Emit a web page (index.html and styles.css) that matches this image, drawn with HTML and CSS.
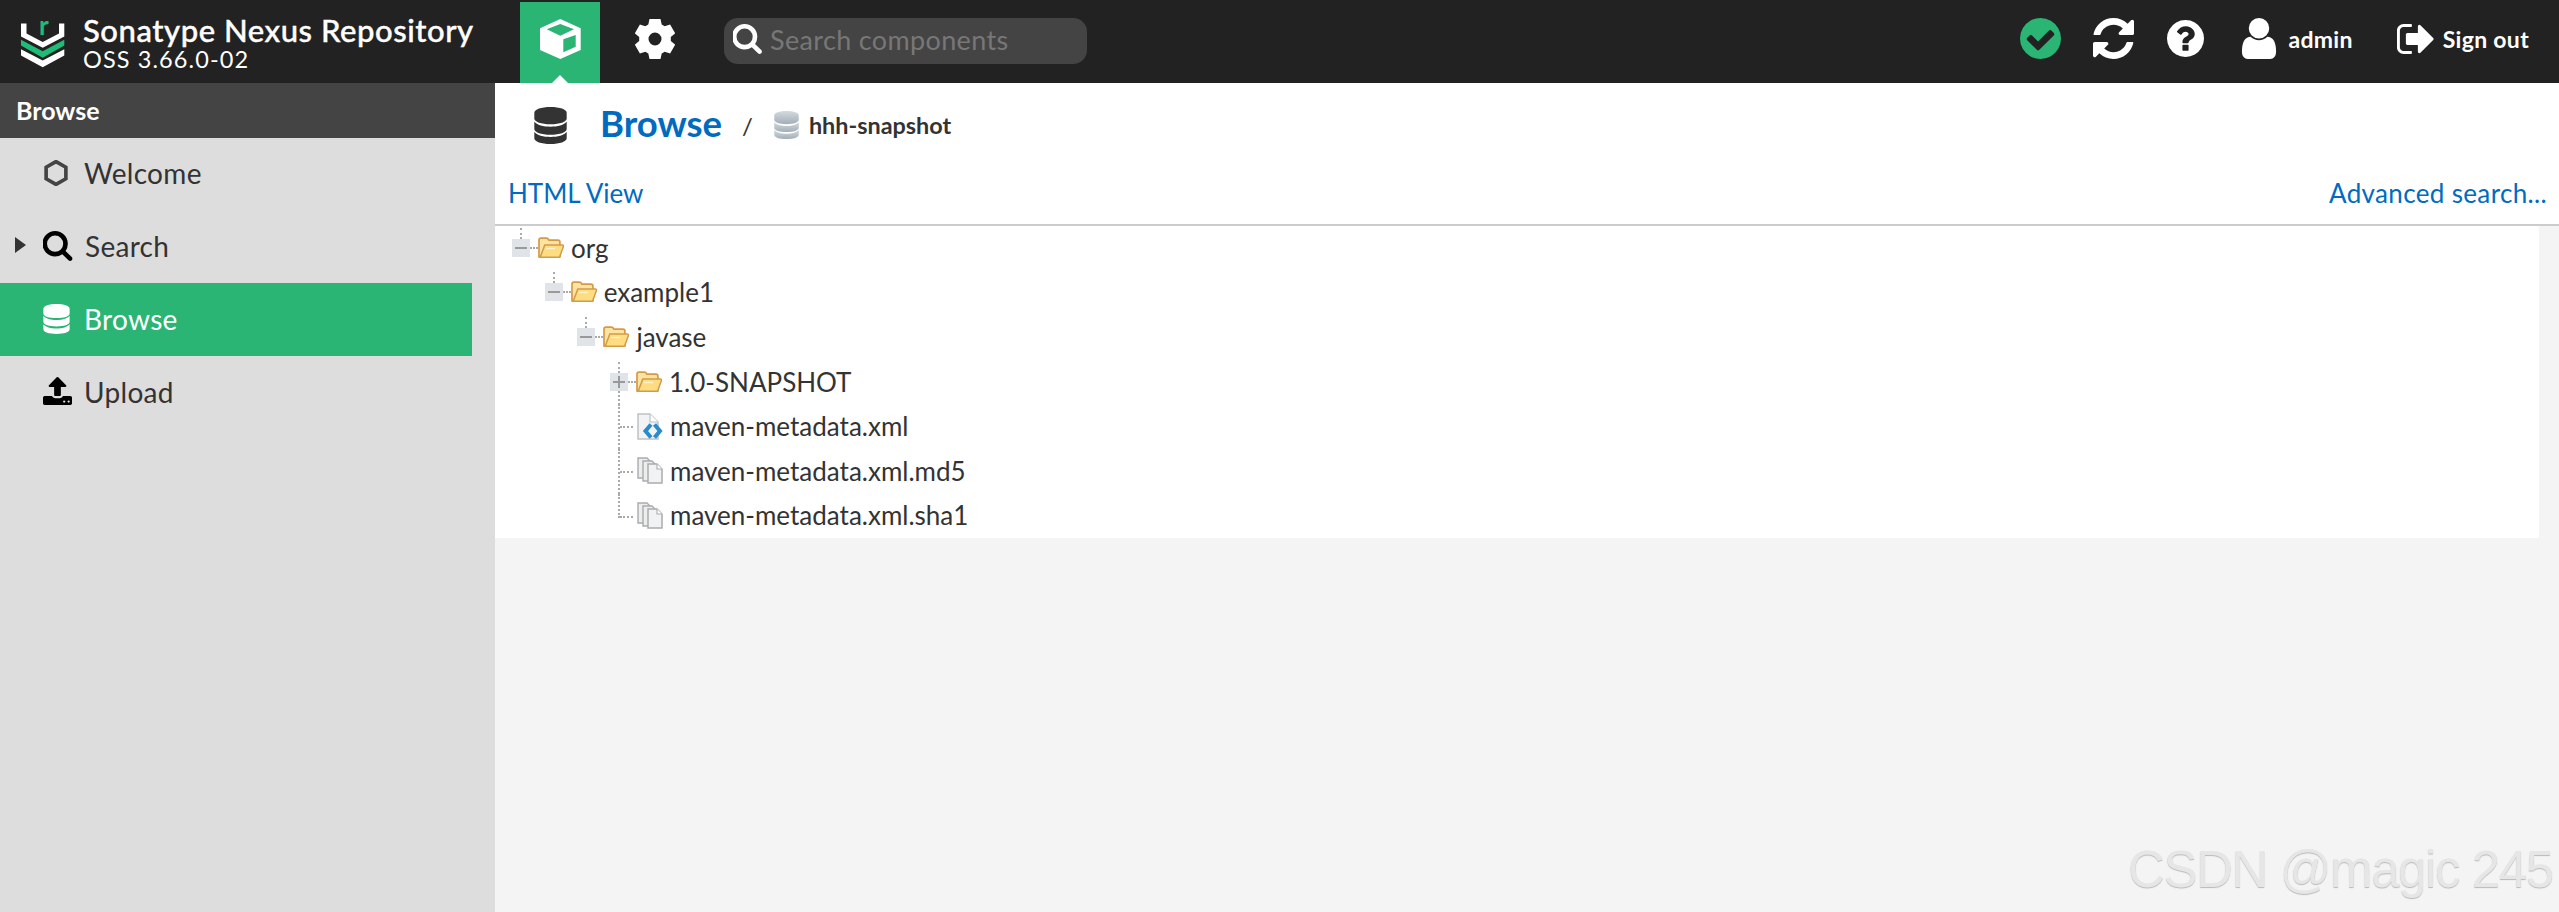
FILE: index.html
```html
<!DOCTYPE html>
<html lang="en">
<head>
<meta charset="utf-8">
<title>Browse - Sonatype Nexus Repository</title>
<link rel="stylesheet" href="styles.css">
</head>
<body>
<svg class="defs" width="0" height="0" aria-hidden="true">
  <defs>
    <symbol id="i-db" viewBox="0 0 28 32">
      <path d="M0 5c0-3 6-5 14-5s14 2 14 5v5c0 3-6 5-14 5S0 13 0 10z"/>
      <path d="M0 12.500c2 3 8 4.500 14 4.500s12-1.500 14-4.500V19c0 3-6 5-14 5S0 22 0 19z"/>
      <path d="M0 21.500c2 3 8 4.500 14 4.500s12-1.500 14-4.500V27c0 3-6 5-14 5S0 30 0 27z"/>
    </symbol>
    <symbol id="i-search" viewBox="128 128 1600 1664"><path d="M1216 832q0-185-131.5-316.5t-316.5-131.5-316.5 131.5-131.5 316.5 131.5 316.5 316.5 131.5 316.5-131.5 131.5-316.5zm512 832q0 52-38 90t-90 38q-54 0-90-38l-343-342q-179 124-399 124-143 0-273.5-55.5t-225-150-150-225-55.5-273.5 55.5-273.5 150-225 225-150 273.5-55.5 273.5 55.5 225 150 150 225 55.5 273.5q0 220-124 399l343 343q37 37 37 90z"/></symbol>
    <symbol id="i-upload" viewBox="64 128 1664 1536"><path d="M1344 1472q0-26-19-45t-45-19-45 19-19 45 19 45 45 19 45-19 19-45zm256 0q0-26-19-45t-45-19-45 19-19 45 19 45 45 19 45-19 19-45zm128-224v320q0 40-28 68t-68 28h-1472q-40 0-68-28t-28-68v-320q0-40 28-68t68-28h427q21 56 70.5 92t110.5 36h256q61 0 110.5-36t70.5-92h427q40 0 68 28t28 68zm-325-648q-17 40-59 40h-256v448q0 26-19 45t-45 19h-256q-26 0-45-19t-19-45v-448h-256q-42 0-59-40-17-39 14-69l448-448q18-19 45-19t45 19l448 448q31 30 14 69z"/></symbol>
    <symbol id="i-folder" viewBox="0 0 26 22">
      <path d="M1 20V3.200C1 2 1.800 1.200 3 1.200h5.500c1 0 1.600.5 2 1.300l.4.7h9c1.200 0 2 .8 2 2v14.800z" fill="#fbe3a2" stroke="#d49a48" stroke-width="1.700"/>
      <path d="M6.800 8h17.600c.8 0 1.300.7 1 1.400l-3.600 10c-.2.6-.7.9-1.300.9H2.200z" fill="#fddc82" stroke="#d49a48" stroke-width="1.500"/>
      <path d="M8 11.500h9" stroke="#fff3cf" stroke-width="1.400"/>
    </symbol>
    <symbol id="i-xml" viewBox="0 0 26 27">
      <path d="M1 1h12l8 8v17H1z" fill="#f2f3f4" stroke="#bfc2c5" stroke-width="1.500"/>
      <path d="M13 1v8h8" fill="#fff" stroke="#bfc2c5" stroke-width="1.200"/>
      <path d="M14 11.500L8.500 18l5.500 6.500M17.500 11.500L23 18l-5.500 6.500" fill="none" stroke="#2a8bcb" stroke-width="4"/>
    </symbol>
    <symbol id="i-copies" viewBox="0 0 26 27">
      <path d="M1 1h9l3 3v17H1z" fill="#eceded" stroke="#a9acaf" stroke-width="1.400"/>
      <path d="M6 4h9l3 3v17H6z" fill="#eceded" stroke="#a9acaf" stroke-width="1.400"/>
      <path d="M11 7h9l5 5v14H11z" fill="#f1f2f3" stroke="#a9acaf" stroke-width="1.500"/>
      <path d="M20 7v5h5" fill="#fff" stroke="#a9acaf" stroke-width="1.100"/>
    </symbol>
    <linearGradient id="g-db" x1="0" y1="0" x2="0" y2="1">
      <stop offset="0" stop-color="#d3dae0"/>
      <stop offset="1" stop-color="#a2aeb8"/>
    </linearGradient>
  </defs>
</svg>

<header class="topbar">
  <div class="brand">
    <svg class="logo" viewBox="0 0 44 48" aria-hidden="true">
      <path class="logo-w" d="M0 4.500h5.500v10L21.700 23l16.300-8.500v-10h5.300v13L21.700 28.800 0 17.500z"/>
      <path class="logo-g" d="M0 20.800L21.700 32.200 43.300 20.800v5.700L21.700 38.800 0 26.500z"/>
      <path class="logo-w" d="M0 30.200L21.700 41.500 43.300 30.200v6.300L21.700 48.200 0 36.500z"/>
      <text class="logo-r" x="18" y="16">r</text>
    </svg>
    <div class="brand-text">
      <div class="brand-name">Sonatype Nexus Repository</div>
      <div class="brand-version">OSS 3.66.0-02</div>
    </div>
  </div>
  <a class="mode mode-active">
    <svg class="cube" viewBox="0 0 41 40" aria-hidden="true">
      <path fill-rule="evenodd" d="M20.300 0L40.700 9.300V31L20.300 40 0 31V9.300zM6.700 10.300L20.300 16.700 34 10.300 20.300 5zM23.300 20.300V33.300L35.700 27.700V16z"/>
    </svg>
  </a>
  <a class="mode">
    <svg class="gear" viewBox="0 0 40 40" aria-hidden="true">
      <path fill-rule="evenodd" d="M14.500 0h11l1.200 5.600 3 1.700 5.400-1.800 5 8.800-4.300 3.800v3.800l4.300 3.800-5 8.800-5.400-1.800-3 1.700L25.500 40h-11l-1.200-5.600-3-1.700-5.400 1.800-5-8.800 4.300-3.800v-3.800L-.1 14.300l5-8.800 5.400 1.800 3-1.700zM20 13.500a6.500 6.500 0 1 0 0 13 6.500 6.500 0 0 0 0-13z"/>
    </svg>
  </a>
  <div class="quick-search">
    <svg class="qs-icon"><use href="#i-search"/></svg>
    <span class="qs-text">Search components</span>
  </div>
  <div class="top-actions">
    <svg class="act act-ok" viewBox="128 128 1536 1536" aria-hidden="true"><path d="M1412 734q0-28-18-46l-91-90q-19-19-45-19t-45 19l-408 407-226-226q-19-19-45-19t-45 19l-91 90q-18 18-18 46 0 27 18 45l362 362q19 19 45 19 27 0 46-19l543-543q18-18 18-45zm252 162q0 209-103 385.500t-279.500 279.500-385.500 103-385.500-103-279.500-279.500-103-385.500 103-385.500 279.500-279.500 385.500-103 385.500 103 279.500 279.500 103 385.500z"/></svg>
    <svg class="act act-refresh" viewBox="128 128 1536 1536" aria-hidden="true"><path d="M1639 1056q0 5-1 7-64 268-268 434.500t-478 166.500q-146 0-282.500-55t-243.500-157l-129 129q-19 19-45 19t-45-19-19-45v-448q0-26 19-45t45-19h448q26 0 45 19t19 45-19 45l-137 137q71 66 161 102t187 36q134 0 250-65t186-179q11-17 53-117 8-23 30-23h192q13 0 22.500 9.500t9.500 22.500zm25-800v448q0 26-19 45t-45 19h-448q-26 0-45-19t-19-45 19-45l138-138q-148-137-349-137-134 0-250 65t-186 179q-11 17-53 117-8 23-30 23h-199q-13 0-22.500-9.500t-9.500-22.500v-7q65-268 270-434.500t480-166.500q146 0 284 55.500t245 156.500l130-129q19-19 45-19t45 19 19 45z"/></svg>
    <svg class="act act-help" viewBox="128 128 1536 1536" aria-hidden="true"><path d="M1024 1376v-192q0-14-9-23t-23-9h-192q-14 0-23 9t-9 23v192q0 14 9 23t23 9h192q14 0 23-9t9-23zm256-672q0-88-55.500-163t-138.500-116-170-41q-243 0-371 213-15 24 8 42l132 100q7 6 19 6 16 0 25-12 53-68 86-92 34-24 86-24 48 0 85.500 26t37.500 59q0 38-20 61t-68 45q-63 28-115.500 86.500t-52.500 125.500v36q0 14 9 23t23 9h192q14 0 23-9t9-23q0-19 21.500-49.500t54.500-49.500q32-18 49-28.500t46-35 44.500-48 28-60.500 12.500-81zm384 192q0 209-103 385.500t-279.500 279.500-385.500 103-385.500-103-279.500-279.500-103-385.500 103-385.500 279.500-279.500 385.500-103 385.500 103 279.500 279.500 103 385.500z"/></svg>
    <span class="act-label-group user-group">
      <svg class="act act-user" viewBox="256 128 1280 1536" aria-hidden="true"><path d="M1536 1399q0 109-62.500 187t-150.500 78h-854q-88 0-150.500-78t-62.500-187q0-85 8.500-160.500t31.500-152 58.500-131 94-89 134.500-34.500q131 128 313 128t313-128q76 0 134.500 34.500t94 89 58.500 131 31.500 152 8.500 160.500zm-256-887q0 159-112.500 271.500t-271.500 112.500-271.500-112.500-112.500-271.500 112.500-271.500 271.500-112.500 271.500 112.500 112.500 271.500z"/></svg>
      <span class="act-label">admin</span>
    </span>
    <span class="act-label-group">
      <svg class="act act-signout" viewBox="128 256 1504 1280" aria-hidden="true"><path d="M704 1440q0 4 1 20t.5 26.500-3 23.500-10 19.500-20.500 6.500h-320q-119 0-203.500-84.500t-84.500-203.500v-704q0-119 84.500-203.500t203.500-84.500h320q13 0 22.500 9.500t9.500 22.500q0 4 1 20t.5 26.500-3 23.500-10 19.500-20.500 6.500h-320q-66 0-113 47t-47 113v704q0 66 47 113t113 47h312l11.500 1 11.500 3 8 5.500 7 9 2 13.500zm928-544q0 26-19 45l-544 544q-19 19-45 19t-45-19-19-45v-288h-448q-26 0-45-19t-19-45v-384q0-26 19-45t45-19h448v-288q0-26 19-45t45-19 45 19l544 544q19 19 19 45z"/></svg>
      <span class="act-label">Sign out</span>
    </span>
  </div>
</header>

<div class="layout">
  <aside class="sidebar">
    <div class="side-title">Browse</div>
    <nav class="nav">
      <a class="nav-item">
        <svg class="nav-icon nav-hex" viewBox="0.5 0.5 23 25" aria-hidden="true"><path d="M12 2l9.500 5.500v11L12 24l-9.500-5.500v-11z"/></svg>
        <span>Welcome</span>
      </a>
      <a class="nav-item nav-branch">
        <span class="caret"></span>
        <svg class="nav-icon nav-search"><use href="#i-search"/></svg>
        <span>Search</span>
      </a>
      <a class="nav-item nav-active">
        <svg class="nav-icon nav-db"><use href="#i-db"/></svg>
        <span>Browse</span>
      </a>
      <a class="nav-item">
        <svg class="nav-icon nav-upload"><use href="#i-upload"/></svg>
        <span>Upload</span>
      </a>
    </nav>
  </aside>

  <main class="content">
    <div class="toolbar">
      <div class="crumbs">
        <svg class="crumb-db"><use href="#i-db"/></svg>
        <span class="crumb-title">Browse</span>
        <span class="crumb-sep">/</span>
        <svg class="crumb-repo"><use href="#i-db"/></svg>
        <span class="crumb-name">hhh-snapshot</span>
      </div>
      <div class="links">
        <a class="link">HTML View</a>
        <a class="link link-adv">Advanced search...</a>
      </div>
    </div>
    <div class="tree">
      <div class="row d0 has-toggle">
        <span class="toggle"><span class="dash"></span></span>
        <svg class="node-icon"><use href="#i-folder"/></svg>
        <span>org</span>
      </div>
      <div class="row d1 has-toggle">
        <span class="toggle"><span class="dash"></span></span>
        <svg class="node-icon"><use href="#i-folder"/></svg>
        <span>example1</span>
      </div>
      <div class="row d2 has-toggle">
        <span class="toggle"><span class="dash"></span></span>
        <svg class="node-icon"><use href="#i-folder"/></svg>
        <span>javase</span>
      </div>
      <div class="row d3 has-toggle toggle-plus">
        <span class="toggle"><span class="dash"></span></span>
        <svg class="node-icon"><use href="#i-folder"/></svg>
        <span>1.0-SNAPSHOT</span>
      </div>
      <div class="row d3 leaf">
        <svg class="node-icon"><use href="#i-xml"/></svg>
        <span>maven-metadata.xml</span>
      </div>
      <div class="row d3 leaf">
        <svg class="node-icon"><use href="#i-copies"/></svg>
        <span>maven-metadata.xml.md5</span>
      </div>
      <div class="row d3 leaf leaf-last">
        <svg class="node-icon"><use href="#i-copies"/></svg>
        <span>maven-metadata.xml.sha1</span>
      </div>
    </div>
  </main>
</div>
<div class="watermark">CSDN @magic 245</div>
</body>
</html>
```
FILE: styles.css
```css
* { box-sizing: border-box; }
html, body { height: 100%; }
body {
  margin: 0;
  font-family: "Lato", "Open Sans", sans-serif;
  color: #333;
  background: #f4f4f4;
  overflow: hidden;
  position: relative;
}
.defs { position: absolute; }
svg { display: block; flex: none; }

/* Top bar */
.topbar {
  height: 83px;
  background: #222;
  display: flex;
  align-items: flex-start;
  color: #fff;
}
.brand { width: 520px; display: flex; padding: 19px 0 0 21px; }
.logo { width: 44px; height: 48px; margin-right: 18px; overflow: visible; }
.logo-w { fill: #fff; }
.logo-g { fill: #1fbc78; }
.logo-r { fill: #1fbc78; font: 700 26px "Lato", sans-serif; }
.brand-text { margin-top: -5px; }
.brand-name { font-size: 31px; line-height: 33px; font-weight: 500; letter-spacing: .55px; -webkit-text-stroke: .4px #fff; }
.brand-version { font-size: 23.500px; line-height: 25px; letter-spacing: 1.100px; }

.mode { width: 80px; height: 81px; margin-top: 2px; display: flex; justify-content: center; padding-top: 17px; position: relative; }
.mode + .mode { margin-left: 15px; }
.mode-active { background: #2bb574; }
.mode-active::after {
  content: "";
  position: absolute;
  left: 32px;
  bottom: 0;
  border: 8px solid transparent;
  border-top: 0;
  border-bottom-color: #fff;
}
.cube { width: 41px; height: 40px; fill: #fff; }
.gear { width: 40px; height: 40px; fill: #fff; }

.quick-search {
  margin: 18px 0 0 29px;
  width: 363px;
  height: 46px;
  border-radius: 14px;
  background: #444;
  display: flex;
  align-items: center;
  padding: 0 0 4px 9px;
}
.qs-icon { width: 29px; height: 30px; fill: #fff; margin-right: 8px; }
.qs-text { color: #777; font-size: 27px; letter-spacing: .35px; }

.top-actions {
  margin-left: auto;
  padding-right: 30px;
  height: 77px;
  display: flex;
  align-items: center;
}
.act { fill: #fff; }
.act-ok { width: 41px; height: 41px; fill: #2bb574; margin-right: 32px; }
.act-refresh { width: 41px; height: 41px; margin-right: 33px; }
.act-help { width: 37px; height: 37px; margin-right: 36px; }
.act-user { width: 38px; height: 41px; margin-right: 10px; }
.act-signout { width: 38px; height: 30px; margin-right: 8px; }
.act-label-group { display: flex; align-items: center; }
.user-group { margin-right: 44px; }
.act-label { font-size: 23px; font-weight: 700; letter-spacing: .3px; }

/* Layout */
.layout { display: flex; height: calc(100% - 83px); }
.sidebar { width: 495px; background: #ddd; flex: none; }
.side-title {
  height: 55px;
  background: #444;
  color: #fff;
  font-size: 25px;
  font-weight: 700;
  line-height: 55px;
  padding-left: 16px;
}
.nav { width: 472px; margin-top: -1px; }
.nav-item {
  display: flex;
  align-items: center;
  height: 73px;
  padding: 0 0 2px 43px;
  font-size: 28px;
  letter-spacing: .3px;
  color: #333;
  position: relative;
}
.nav-active { background: #2bb574; color: #fff; }
.nav-icon { margin-right: 13px; }
.nav-hex { width: 24px; height: 26px; fill: none; stroke: #444; stroke-width: 3.500; margin-left: 1px; margin-right: 16px; }
.nav-search { width: 30px; height: 30px; fill: #000; margin-right: 12px; }
.nav-db { width: 27px; height: 30px; fill: #fff; margin-right: 14px; }
.nav-upload { width: 29px; height: 29px; fill: #000; margin-right: 12px; }
.caret {
  position: absolute;
  left: 15px;
  top: 27px;
  border: 8px solid transparent;
  border-right: 0;
  border-left: 11px solid #333;
}

/* Content */
.content { flex: 1; min-width: 0; }
.toolbar { height: 143px; background: #fff; border-bottom: 2px solid #ccc; padding-top: 23px; }
.crumbs { display: flex; align-items: center; height: 38px; padding-left: 37px; }
.crumb-db { width: 37px; height: 37px; fill: #333; margin-right: 31px; }
.crumb-title { font-size: 36.500px; font-weight: 700; color: #006bbf; margin-right: 20px; padding-bottom: 4px; }
.crumb-sep { font-size: 24px; margin-right: 20px; color: #333; }
.crumb-repo { width: 27px; height: 28px; fill: url(#g-db); margin-right: 9px; }
.crumb-name { font-size: 23.400px; font-weight: 700; color: #333; }
.links {
  display: flex;
  justify-content: space-between;
  padding: 0 12px 0 13px;
  margin-top: 31px;
  font-size: 26px;
  line-height: 36px;
  color: #006bbf;
}
.link-adv { letter-spacing: .35px; }

.tree { background: #fff; margin-right: 20px; height: 312px; font-size: 26px; color: #333; }
.row { display: flex; align-items: center; height: 44.6px; position: relative; padding-bottom: 1px; }
.d0 { padding-left: 17px; }
.d1 { padding-left: 49.700px; }
.d2 { padding-left: 82.400px; }
.d3 { padding-left: 115px; }
.toggle { width: 18px; height: 18px; background: #e0e3e8; margin-right: 8px; position: relative; display: block; }
.toggle::before {
  content: "";
  position: absolute;
  left: 8px;
  top: -11px;
  height: 11px;
  border-left: 2px dotted #aaa;
}
.toggle::after {
  content: "";
  position: absolute;
  left: 18px;
  top: 8px;
  width: 8px;
  border-top: 2px dotted #aaa;
}
.dash { position: absolute; left: 3px; right: 3px; top: 8px; height: 2px; background: #999; }
.toggle-plus .dash::after {
  content: "";
  position: absolute;
  left: 5px;
  top: -5px;
  width: 2px;
  height: 12px;
  background: #999;
}
.toggle-plus::after {
  content: "";
  position: absolute;
  left: 123px;
  top: 31px;
  height: 14px;
  border-left: 2px dotted #aaa;
}
.node-icon { width: 26px; height: 22px; margin-right: 7px; }
.leaf .node-icon { height: 27px; }
.leaf { padding-left: 142px; }
.leaf::before {
  content: "";
  position: absolute;
  left: 123px;
  top: 0;
  height: 100%;
  border-left: 2px dotted #aaa;
}
.leaf::after {
  content: "";
  position: absolute;
  left: 125px;
  top: 22px;
  width: 13px;
  border-top: 2px dotted #aaa;
}
.leaf-last::before { height: 24px; }

.watermark {
  position: absolute;
  left: 2128px;
  top: 840px;
  font: 51px/60px "Liberation Sans", sans-serif;
  letter-spacing: -1.400px;
  color: #e6e6e6;
  text-shadow: 0 1px 1px #b8b8b8;
  white-space: nowrap;
}
```
